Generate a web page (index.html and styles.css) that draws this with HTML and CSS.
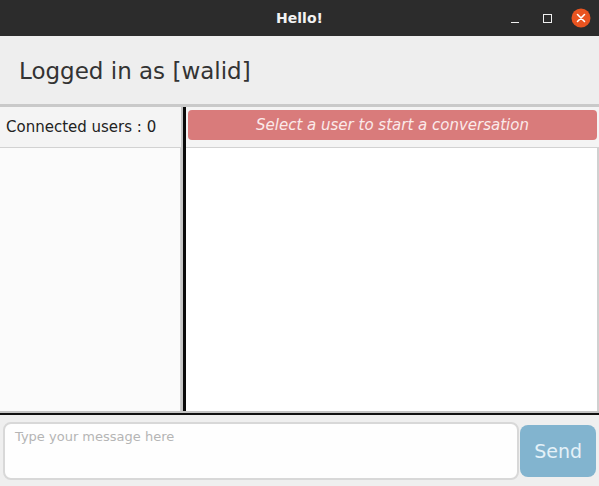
FILE: index.html
```html
<!DOCTYPE html>
<html>
<head>
<meta charset="utf-8">
<link rel="stylesheet" href="styles.css">
</head>
<body>
<div class="window">
  <div class="titlebar">
    <span class="title">Hello!</span>
    <div class="controls">
      <span class="ctl min"></span>
      <span class="ctl max"></span>
      <span class="ctl close">
        <svg width="20" height="20" viewBox="0 0 20 20"><circle cx="10" cy="10" r="9.5" fill="#e95420"/><path d="M6.5 6.5 L13.5 13.5 M13.5 6.5 L6.5 13.5" stroke="#fff" stroke-width="1.6" stroke-linecap="round"/></svg>
      </span>
    </div>
  </div>
  <div class="header">Logged in as [walid]</div>
  <div class="main">
    <div class="users">
      <div class="users-head">Connected users : 0</div>
      <div class="users-list"></div>
    </div>
    <div class="divider"></div>
    <div class="chat">
      <div class="chat-head"><div class="banner">Select a user to start a conversation</div></div>
      <div class="chat-body"></div>
    </div>
  </div>
  <div class="composer">
    <textarea class="input" placeholder="Type your message here"></textarea>
    <button class="send">Send</button>
  </div>
</div>
</body>
</html>
```
FILE: styles.css
```css
* { box-sizing: border-box; }
html, body { margin: 0; padding: 0; }
body { width: 599px; height: 486px; overflow: hidden; font-family: "DejaVu Sans", sans-serif; background: #efefef; }
.window { display: flex; flex-direction: column; height: 486px; }
.titlebar { height: 36px; background: #2c2c2c; position: relative; display: flex; align-items: center; justify-content: center; flex: none; }
.title { color: #f2f2f2; font-weight: bold; font-size: 14px; font-family: "DejaVu Sans", sans-serif; }
.controls { position: absolute; right: 8px; top: 7px; display: flex; align-items: center; gap: 0; height: 22px; }
.ctl { display: block; position: relative; }
.min { width: 10px; height: 22px; margin-right: 22px; }
.min::after { content: ""; position: absolute; left: 0; bottom: 6px; width: 8px; height: 1.5px; background: #f0f0f0; }
.max { width: 9px; height: 9px; border: 1.5px solid #f0f0f0; margin-right: 19px; }
.close { width: 20px; height: 20px; }
.close svg { display: block; }
.header { height: 71px; flex: none; background: #eeeeee; color: #333333; font-size: 23px; padding: 0 0 0 19px; display: flex; align-items: center; padding-top: 1px; border-bottom: 3px solid #c9c9c9; }
.main { display: flex; height: 306px; flex: none; border-bottom: 2px solid #c4c4c4; }
.users { width: 181px; display: flex; flex-direction: column; }
.users-head { height: 41px; background: #f4f4f4; border-bottom: 1px solid #d2d2d2; color: #222; font-size: 15px; padding-left: 6px; display: flex; align-items: center; }
.users-list { flex: 1; background: #fbfbfb; border-right: 1px solid #d0d0d0; }
.divider { width: 5px; background: #c6c6c6; border-right: 3px solid #0a0a0a; }
.chat { flex: 1; display: flex; flex-direction: column; }
.chat-head { height: 41px; background: #f4f4f4; padding: 3px 2px 0 2px; border-bottom: 1px solid #d2d2d2; }
.banner { height: 30px; background: #d97b7b; border-radius: 4px; color: #fbeaea; font-style: italic; font-size: 15px; display: flex; align-items: center; justify-content: center; }
.chat-body { flex: 1; background: #ffffff; border-right: 2px solid #d0d0d0; }
.composer { flex: 1; border-top: 2px solid #111; background: #efefef; display: flex; align-items: center; padding: 0 3px 0 3px; gap: 1px; }
.input { width: 517px; height: 58px; margin-top: 0; border: 2px solid #d8d8d8; border-radius: 8px; background: #fefefe; resize: none; font-family: "DejaVu Sans", sans-serif; font-size: 13px; padding: 5px 10px; color: #333; outline: none; }
.input::placeholder { color: #b5b5b5; }
.send { width: 76px; height: 52px; border: none; border-radius: 8px; background: #82b4cf; color: #e4f1f8; font-family: "DejaVu Sans", sans-serif; font-size: 19px; padding: 0; }
```
